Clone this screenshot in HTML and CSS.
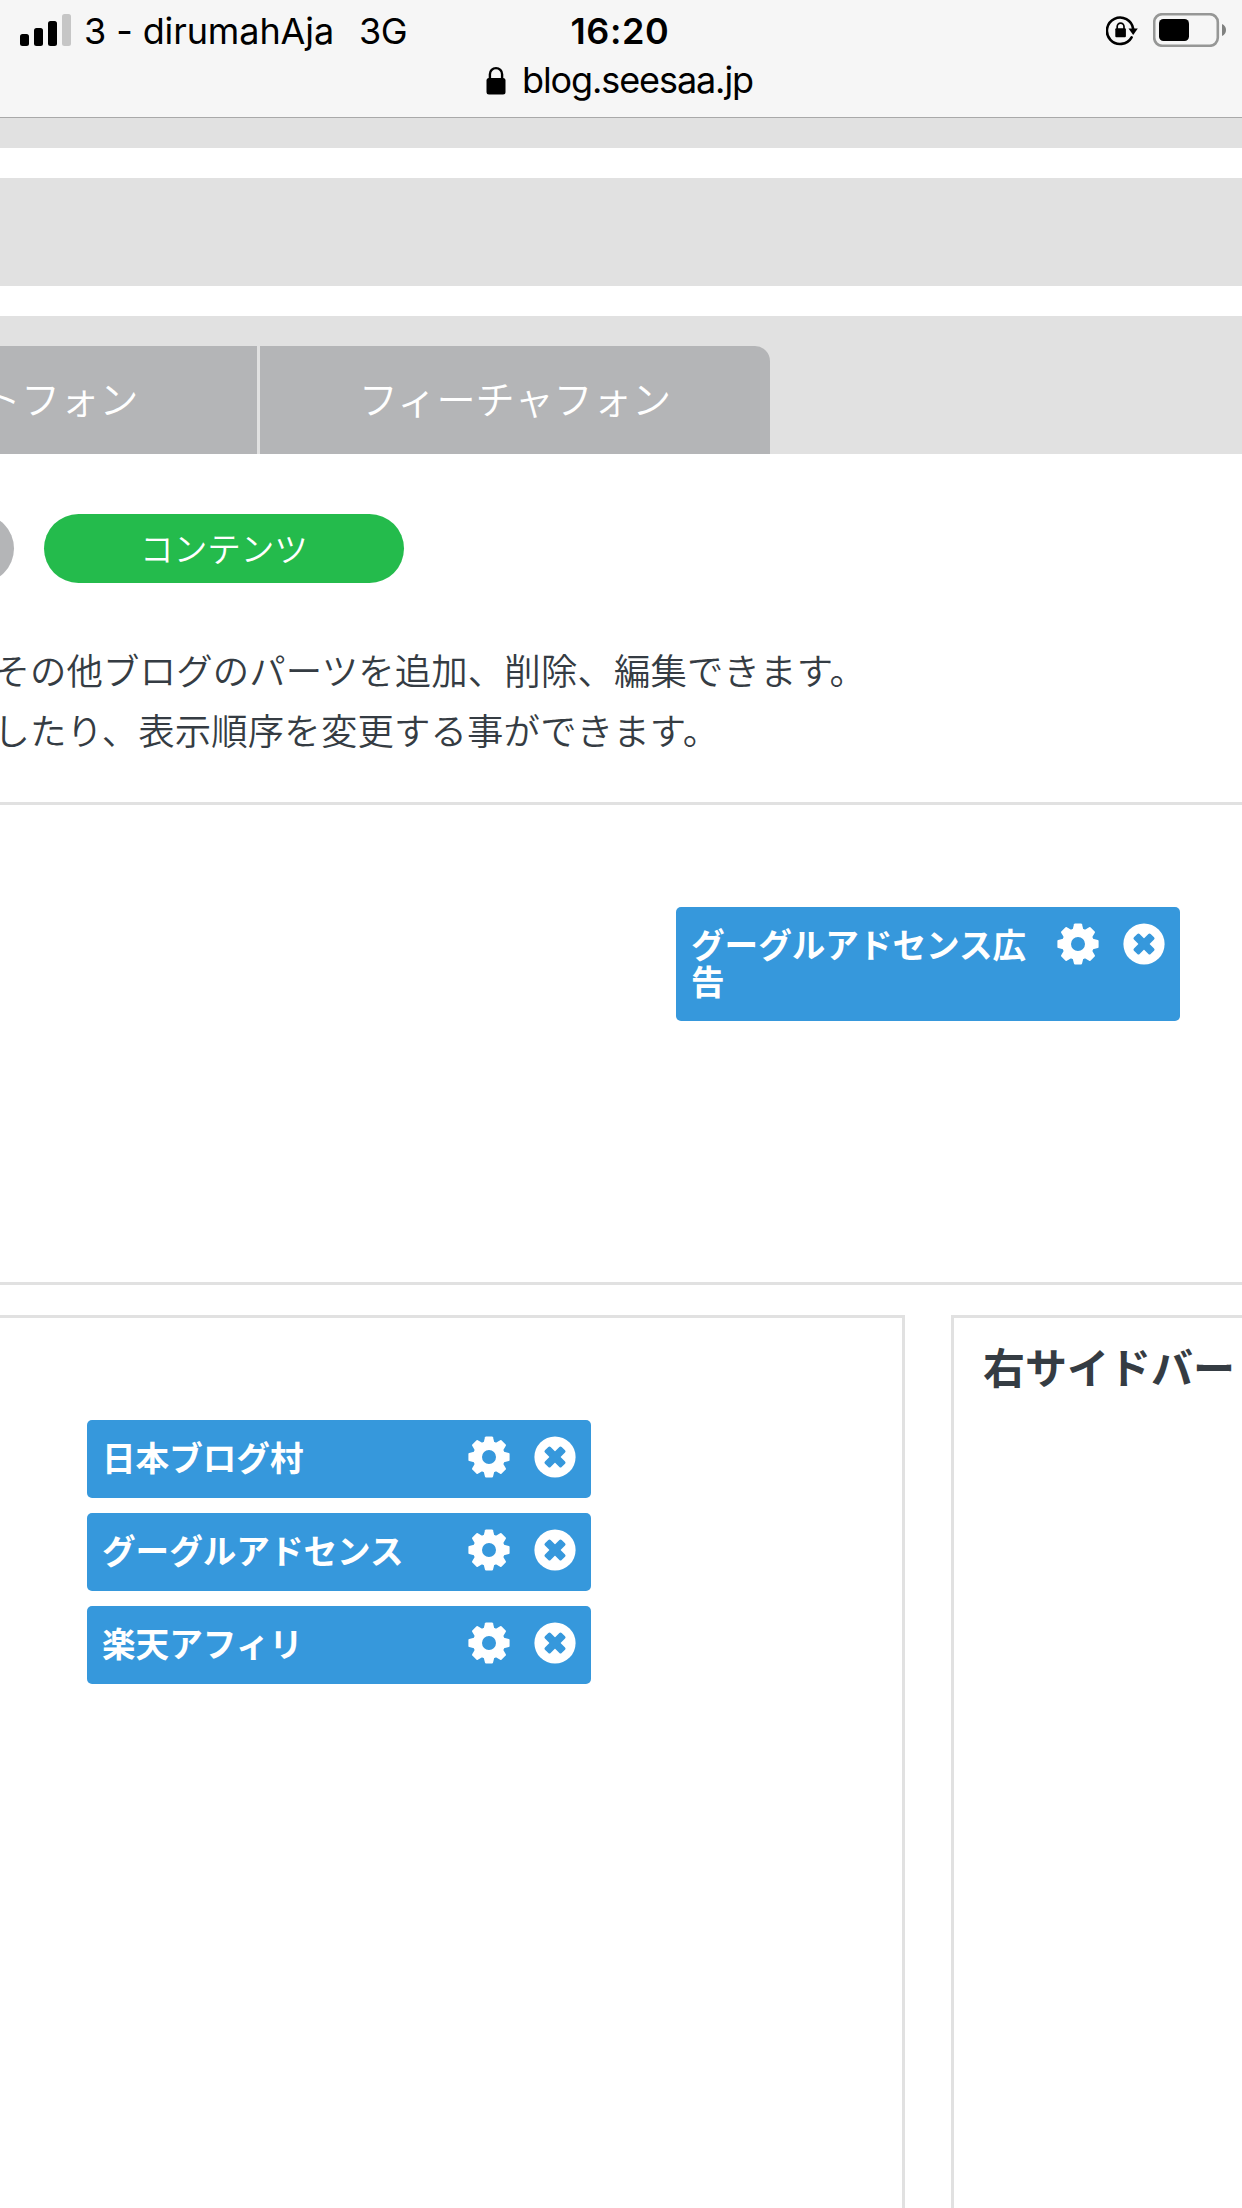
FILE: index.html
```html
<!DOCTYPE html>
<html lang="ja">
<head>
  <meta charset="UTF-8">
  <meta name="viewport" content="width=device-width, initial-scale=1.0">
  <title>コンテンツ</title>
  <link rel="stylesheet" href="styles.css">
</head>
<body>
<svg class="sprite" aria-hidden="true">
  <defs>
    <path id="tooth" d="M-5.4 -14L-4 -19.8Q-3.8 -20.6 -3 -20.6H3Q3.8 -20.6 4 -19.8L5.4 -14Z"/>
    <symbol id="gear" viewBox="-21 -21 42 42">
      <circle r="11.5" fill="none" stroke="currentColor" stroke-width="9"/>
      <g fill="currentColor">
        <use href="#tooth"/>
        <use href="#tooth" transform="rotate(45)"/>
        <use href="#tooth" transform="rotate(90)"/>
        <use href="#tooth" transform="rotate(135)"/>
        <use href="#tooth" transform="rotate(180)"/>
        <use href="#tooth" transform="rotate(225)"/>
        <use href="#tooth" transform="rotate(270)"/>
        <use href="#tooth" transform="rotate(315)"/>
      </g>
    </symbol>
    <symbol id="close" viewBox="-21 -21 42 42">
      <circle r="20.6" fill="currentColor"/>
      <g fill="#3698dc">
        <rect x="-11.8" y="-4" width="23.6" height="8" rx="1.6" transform="rotate(45)"/>
        <rect x="-11.8" y="-4" width="23.6" height="8" rx="1.6" transform="rotate(-45)"/>
      </g>
    </symbol>
  </defs>
</svg>

<header class="browser-bar">
  <div class="status">
    <div class="status-left">
      <svg class="signal" width="51" height="32" viewBox="0 0 51 32">
        <rect x="0" y="20" width="9" height="12" rx="2.5"/>
        <rect x="14" y="14" width="9" height="18" rx="2.5"/>
        <rect x="28" y="7" width="9" height="25" rx="2.5"/>
        <rect x="42" y="0" width="9" height="32" rx="2.5" fill="#c6c6c6"/>
      </svg>
      <span class="carrier">3 - dirumahAja</span>
      <span class="network">3G</span>
    </div>
    <div class="time">16:20</div>
    <div class="status-right">
      <svg width="32" height="30" viewBox="0 0 32 30">
        <path d="M25.6 21.3A13.2 13.2 0 1 1 27.2 13" fill="none" stroke="#000" stroke-width="2.6" stroke-linecap="round"/>
        <path d="M22.5 12.5H31.8L27.2 19Z"/>
        <rect x="9.3" y="12.3" width="10.6" height="9" rx="1"/>
        <path d="M11.2 13V10.5a3.4 3.4 0 0 1 6.8 0V13" fill="none" stroke="#000" stroke-width="1.7"/>
      </svg>
      <svg width="73" height="34" viewBox="0 0 73 34">
        <rect x="1.2" y="1.2" width="63.6" height="31.6" rx="8" fill="none" stroke="#969796" stroke-width="2.6"/>
        <rect x="6" y="6" width="30" height="22" rx="4.5"/>
        <path d="M69 11q4 1.8 4 6t-4 6z" fill="#808180"/>
      </svg>
    </div>
  </div>
  <div class="address">
    <svg width="20" height="29" viewBox="0 0 20 29">
      <rect x="0.5" y="12" width="19" height="16.5" rx="2.5"/>
      <path d="M3.9 13V8.2a6.1 6.1 0 0 1 12.2 0V13" fill="none" stroke="#000" stroke-width="2.4"/>
    </svg>
    <span>blog.seesaa.jp</span>
  </div>
</header>

<main class="page">
  <div class="strip strip-top"></div>
  <div class="strip strip-menu"></div>
  <nav class="tabs">
    <a class="tab">スマートフォン</a>
    <a class="tab tab-last">フィーチャフォン</a>
  </nav>

  <div class="pills">
    <a class="pill"></a>
    <a class="pill active">コンテンツ</a>
  </div>

  <p class="lead">その他ブログのパーツを追加、削除、編集できます。<br>したり、表示順序を変更する事ができます。</p>

  <section class="top-area">
    <div class="part">
      <span class="part-name">グーグルアドセンス広告</span>
      <svg class="icon"><use href="#gear"/></svg>
      <svg class="icon"><use href="#close"/></svg>
    </div>
  </section>

  <div class="columns">
    <section class="column main-column">
      <div class="part">
        <span class="part-name">日本ブログ村</span>
        <svg class="icon"><use href="#gear"/></svg>
        <svg class="icon"><use href="#close"/></svg>
      </div>
      <div class="part">
        <span class="part-name">グーグルアドセンス</span>
        <svg class="icon"><use href="#gear"/></svg>
        <svg class="icon"><use href="#close"/></svg>
      </div>
      <div class="part">
        <span class="part-name">楽天アフィリ</span>
        <svg class="icon"><use href="#gear"/></svg>
        <svg class="icon"><use href="#close"/></svg>
      </div>
    </section>
    <section class="column side-column">
      <h2>右サイドバー</h2>
    </section>
  </div>
</main>
</body>
</html>
```

FILE: styles.css
```css
:root {
  --gray: #e1e1e1;
  --tab: #b4b5b7;
  --green: #24bb4c;
  --blue: #3698dc;
  --text: #353c43;
}

* {
  margin: 0;
  padding: 0;
  box-sizing: border-box;
}

body {
  width: 1242px;
  height: 2208px;
  overflow: hidden;
  display: flex;
  flex-direction: column;
  background: #fff;
  color: var(--text);
  font-family: "Noto Sans CJK JP", sans-serif;
  font-weight: 350;
}

svg {
  display: block;
  flex: none;
}

.sprite {
  width: 0;
  height: 0;
  position: absolute;
}

/* Browser bar */
.browser-bar {
  flex: none;
  height: 118px;
  background: #f6f6f6;
  border-bottom: 1px solid #a9a9a9;
  color: #000;
  font-family: Inter, sans-serif;
  font-size: 36px;
  font-weight: 400;
  line-height: 44px;
}

.status {
  display: grid;
  grid-template-columns: 1fr auto 1fr;
  height: 56px;
  padding: 9px 16px 0 14px;
}

.status-left,
.status-right {
  display: flex;
}

.signal {
  margin: 5px 0 0 6px;
}

.carrier {
  margin-left: 13px;
  letter-spacing: -0.1px;
}

.network {
  margin-left: 25px;
  letter-spacing: -0.6px;
}

.time {
  font-weight: 600;
  letter-spacing: 0.6px;
}

.status-right {
  justify-content: flex-end;
  gap: 15px;
  padding-top: 4px;
}

.status-right svg:first-child {
  margin-top: 3px;
}

.address {
  display: flex;
  justify-content: center;
  gap: 16px;
  padding: 2px 3px 0 0;
  letter-spacing: -1.1px;
}

.address svg {
  margin-top: 8px;
}

/* Page */
.page {
  flex: 1;
  display: flex;
  flex-direction: column;
  overflow: hidden;
}

.strip {
  background: var(--gray);
  margin-bottom: 30px;
}

.strip-top {
  height: 30px;
}

.strip-menu {
  height: 108px;
}

.tabs {
  display: flex;
  gap: 3px;
  height: 138px;
  padding-top: 30px;
  background: var(--gray);
}

.tab {
  flex: none;
  width: 510px;
  background: var(--tab);
  color: #fff;
  font-size: 39.2px;
  line-height: 102px;
  text-align: center;
}

.tab:first-child {
  margin-left: -253px;
}

.tab-last {
  border-top-right-radius: 15px;
}

.pills {
  display: flex;
  gap: 30px;
  margin: 60px 0 0 -346px;
}

.pill {
  flex: none;
  width: 360px;
  height: 69px;
  border-radius: 34.5px;
  background: var(--tab);
  color: #fff;
  font-size: 33.6px;
  line-height: 68px;
  text-align: center;
}

.pill.active {
  background: var(--green);
}

.lead {
  height: 219px;
  margin-left: -6.5px;
  padding-top: 56px;
  font-size: 36.4px;
  line-height: 60px;
  letter-spacing: 0.15px;
  white-space: nowrap;
}

.top-area {
  height: 483px;
  padding: 102px 62px 0 0;
  border-top: 3px solid var(--gray);
  border-bottom: 3px solid var(--gray);
}

.top-area .part {
  margin-left: auto;
  height: 114px;
}

.part {
  display: flex;
  width: 504px;
  height: 78px;
  padding: 16px 15px 0;
  border-radius: 5px;
  background: var(--blue);
  color: #fff;
  font-size: 33.6px;
  font-weight: 700;
  line-height: 37px;
}

.part-name {
  width: 337px;
  margin-right: auto;
  padding-top: 2px;
}

.icon {
  width: 42px;
  height: 42px;
}

.icon + .icon {
  margin-left: 24px;
}

.columns {
  flex: 1;
  display: flex;
  gap: 46px;
  padding-top: 30px;
}

.column {
  flex: none;
  border: 3px solid var(--gray);
  border-bottom: 0;
}

.main-column {
  display: flex;
  flex-direction: column;
  gap: 15px;
  width: 905px;
  border-left: 0;
  padding: 102px 0 0 87px;
}

.side-column {
  width: 400px;
  padding: 20px 29px;
}

.side-column h2 {
  font-size: 42px;
  font-weight: 700;
  line-height: 56px;
  white-space: nowrap;
}
```
